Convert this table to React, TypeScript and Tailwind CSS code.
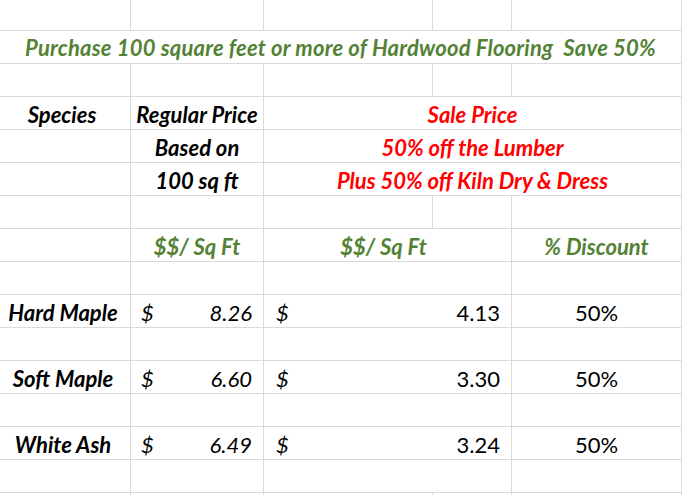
import type { ReactNode } from "react";

const line = "border-r border-b border-[#dadada]";

function Cell({
  span = "",
  className = "",
  children,
}: {
  span?: string;
  className?: string;
  children?: ReactNode;
}) {
  return (
    <div className={`${line} ${span} flex items-end overflow-visible whitespace-pre pb-[3px] ${className}`}>
      {children}
    </div>
  );
}

function EmptyRow({ merged = false }: { merged?: boolean }) {
  return merged ? (
    <>
      <Cell />
      <Cell />
      <Cell span="col-span-2" />
      <Cell />
    </>
  ) : (
    <>
      <Cell />
      <Cell />
      <Cell />
      <Cell />
      <Cell />
    </>
  );
}

const filas = [
  { especie: "Hard Maple", regular: "8.26", oferta: "4.13" },
  { especie: "Soft Maple", regular: "6.60", oferta: "3.30" },
  { especie: "White Ash", regular: "6.49", oferta: "3.24" },
];

export default function App() {
  return (
    <div className="h-[495px] w-[682px] overflow-hidden bg-white font-['Lato','Open_Sans',sans-serif] text-[22px] leading-none">
      <div className="grid grid-cols-[131px_133px_169px_79px_170px] grid-rows-[31px] auto-rows-[33px]">
        <EmptyRow />

        <Cell span="col-span-5" className="justify-center pb-[4px] font-bold italic tracking-[0.2px] text-[#548235]">
          {"Purchase 100 square feet or more of Hardwood Flooring  Save 50%"}
        </Cell>

        <EmptyRow />

        <Cell className="justify-center pr-[6px] font-bold italic text-black">Species</Cell>
        <Cell className="justify-center font-bold italic text-black">Regular Price</Cell>
        <Cell span="col-span-3" className="justify-center font-bold italic text-[#ff0000]">
          Sale Price
        </Cell>

        <Cell />
        <Cell className="justify-center font-bold italic text-black">Based on</Cell>
        <Cell span="col-span-3" className="justify-center font-bold italic text-[#ff0000]">
          50% off the Lumber
        </Cell>

        <Cell />
        <Cell className="justify-center font-bold italic text-black">100 sq ft</Cell>
        <Cell span="col-span-3" className="justify-center font-bold italic text-[#ff0000]">
          Plus 50% off Kiln Dry &amp; Dress
        </Cell>

        <EmptyRow />

        <Cell />
        <Cell className="justify-center font-bold italic text-[#548235]">$$/ Sq Ft</Cell>
        <Cell span="col-span-2" className="justify-center pr-[8px] font-bold italic text-[#548235]">
          $$/ Sq Ft
        </Cell>
        <Cell className="justify-center font-bold italic text-[#548235]">% Discount</Cell>

        <EmptyRow merged />

        {filas.map((f) => (
          <div key={f.especie} className="contents">
            <Cell className="justify-center pr-[4px] font-bold italic text-black">{f.especie}</Cell>
            <Cell className="justify-between pl-[10px] pr-[11px] italic text-black">
              <span>$</span>
              <span>{f.regular}</span>
            </Cell>
            <Cell span="col-span-2" className="justify-between pl-[12px] pr-[11px] text-black">
              <span className="italic">$</span>
              <span>{f.oferta}</span>
            </Cell>
            <Cell className="justify-center text-black">50%</Cell>
            <EmptyRow merged />
          </div>
        ))}

        <EmptyRow />
      </div>
    </div>
  );
}
